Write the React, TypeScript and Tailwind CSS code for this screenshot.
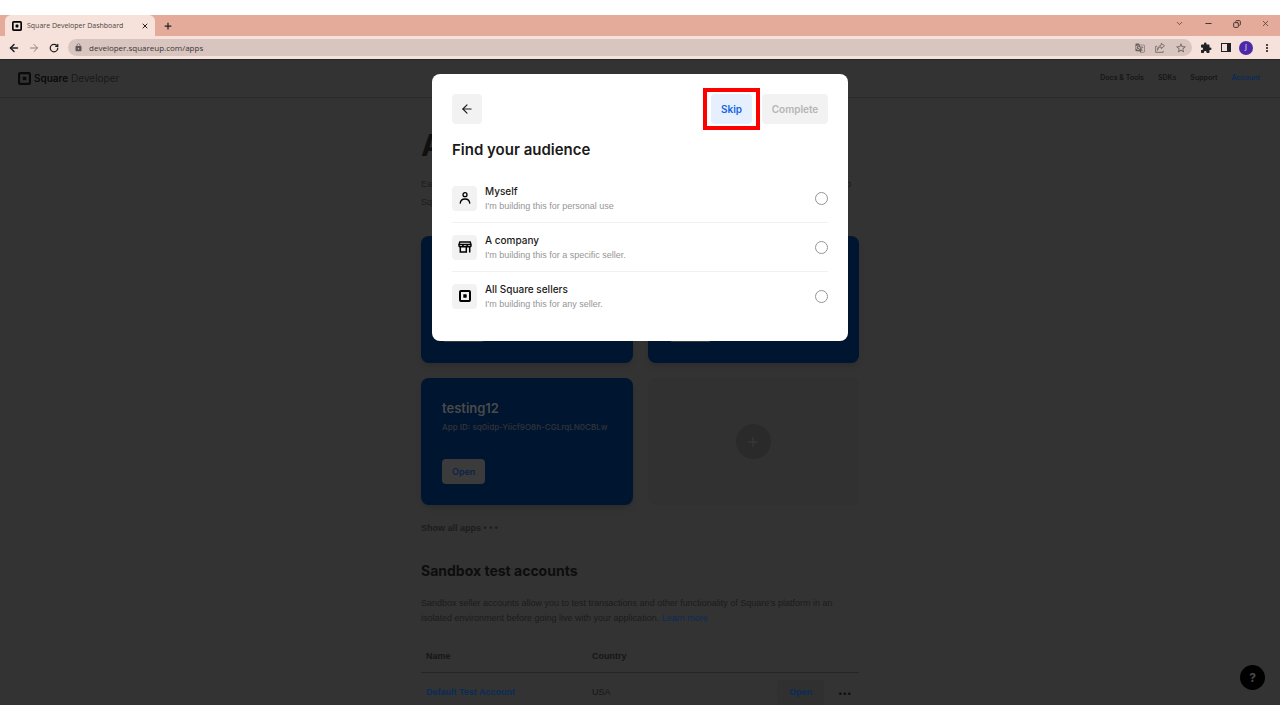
import React from 'react';
import { ArrowLeft, ArrowRight, ChevronDown, Copy, Minus, Plus, RotateCw, X } from 'lucide-react';
import { MdGTranslate, MdLock, MdMoreVert, MdOutlineStarBorder } from 'react-icons/md';

interface AppCardProps {
  name: string;
  appId: string;
}

interface Audience {
  id: string;
  title: string;
  description: string;
  icon: React.ReactNode;
}

const SquareLogo = ({ className }: { className: string }) => (
  <svg viewBox="0 0 12 12" className={className} aria-hidden="true">
    <rect x="1" y="1" width="10" height="10" rx="1" fill="none" stroke="currentColor" strokeWidth="2" />
    <rect x="4.3" y="4.3" width="3.4" height="3.4" rx="0.4" fill="currentColor" />
  </svg>
);

const PersonIcon = () => (
  <svg viewBox="0 0 12 12" className="h-3 w-3" fill="none" stroke="currentColor" strokeWidth="1.3" aria-hidden="true">
    <circle cx="6" cy="2.7" r="2" />
    <path d="M1.2 11.6C1.4 8.6 3.4 7 6 7s4.600 1.600 4.800 4.600" />
  </svg>
);

const StoreIcon = () => (
  <svg viewBox="0 0 14 12" className="h-3 w-3.5" fill="none" stroke="currentColor" strokeWidth="1.5" aria-hidden="true">
    <path d="M1.800 1.100h10.400l.8 2.400v1.300a1 1 0 0 1-1 1h-1.200a1 1 0 0 1-1-1 1 1 0 0 1-1 1H6a1 1 0 0 1-1-1 1 1 0 0 1-1 1H2a1 1 0 0 1-1-1V3.500z" />
    <path d="M1 3.500h12M4.900 3.500v2M9.100 3.500v2M2.300 6v5h6V6M11.700 6v5.500" />
  </svg>
);

const PuzzleIcon = () => (
  <svg viewBox="0 0 24 24" className="h-3 w-3" fill="currentColor" aria-hidden="true">
    <path d="M20.5 11H19V7c0-1.1-.9-2-2-2h-4V3.500a2.500 2.500 0 0 0-5 0V5H4c-1.100 0-2 .9-2 2v3.800h1.500c1.500 0 2.700 1.200 2.700 2.700S5 16.200 3.500 16.200H2V20c0 1.100.9 2 2 2h3.800v-1.500c0-1.500 1.200-2.700 2.700-2.700s2.700 1.200 2.700 2.700V22H17c1.100 0 2-.9 2-2v-4h1.500a2.500 2.500 0 0 0 0-5z" />
  </svg>
);

const ShareIcon = () => (
  <svg viewBox="0 0 12 12" className="h-2.5 w-2.5" fill="none" stroke="currentColor" strokeWidth="1" aria-hidden="true">
    <path d="M2.500 4H.8v7.200h9V9.500" />
    <path d="M3 8.800c.4-2.800 2-4 4.500-4.100V6.800l4-3.400-4-3v2.200C4.600 2.900 3.100 5.500 3 8.800z" />
  </svg>
);

const audiences: Audience[] = [
  { id: 'myself', title: 'Myself', description: "I'm building this for personal use", icon: <PersonIcon /> },
  { id: 'company', title: 'A company', description: "I'm building this for a specific seller.", icon: <StoreIcon /> },
  { id: 'all', title: 'All Square sellers', description: "I'm building this for any seller.", icon: <SquareLogo className="h-3 w-3" /> }
];

const BrowserChrome = () => (
  <div className="shrink-0 font-['Open_Sans',sans-serif] text-[#202124]">
    {/* Tab strip */}
    <div className="flex h-[21px] items-center bg-[#e4ab9a] pl-[5px]">
      <div className="flex h-full w-[150px] items-center rounded-t-md bg-[#f7e1db] pl-[7px] pr-1.5">
        <SquareLogo className="h-2.5 w-2.5 text-black" />
        <span className="ml-[5px] flex-1 whitespace-nowrap pt-px text-[7px] text-[#4b4542]">Square Developer Dashboard</span>
        <button aria-label="Close tab"><X className="h-2 w-2" strokeWidth={3} /></button>
      </div>
      <button aria-label="New tab" className="ml-2"><Plus className="h-2.5 w-2.5" strokeWidth={3} /></button>
      <div className="ml-auto flex items-center gap-5 pb-1 pr-2.5 text-[#4a342e]">
        <button aria-label="Search tabs"><ChevronDown className="h-[9px] w-[9px]" /></button>
        <button aria-label="Minimize"><Minus className="h-[9px] w-[9px]" strokeWidth={3} /></button>
        <button aria-label="Restore"><Copy className="h-2 w-2 -scale-x-100" strokeWidth={3} /></button>
        <button aria-label="Close window"><X className="h-[9px] w-[9px]" /></button>
      </div>
    </div>

    {/* Toolbar */}
    <div className="flex h-[23px] items-center gap-2 bg-[#f7e1db] pl-2 pr-[7px]">
      <button aria-label="Back"><ArrowLeft className="h-3 w-3" strokeWidth={3} /></button>
      <button aria-label="Forward" className="text-[#8d817d]"><ArrowRight className="h-3 w-3" /></button>
      <button aria-label="Reload" className="flex w-3 justify-center"><RotateCw className="h-2.5 w-2.5" strokeWidth={3} /></button>
      <div className="flex h-[17px] min-w-0 flex-1 items-center rounded-full bg-[#d8c5bf] pl-1.5 pr-[5px]">
        <MdLock className="h-[9px] w-[9px] text-[#5f5754]" />
        <input
          aria-label="Address"
          defaultValue="developer.squareup.com/apps"
          className="ml-1.5 min-w-0 flex-1 bg-transparent text-[8px] leading-4 text-[#3a3533] outline-none"
        />
        <div className="flex items-center gap-2.5 text-[#6b615e]">
          <MdGTranslate className="h-2.5 w-2.5" />
          <ShareIcon />
          <MdOutlineStarBorder className="h-3 w-3" />
        </div>
      </div>
      <PuzzleIcon />
      <span className="ml-px h-[9px] w-2.5 border border-r-4 border-[#202124]" />
      <span className="flex h-3.5 w-3.5 items-center justify-center rounded-full bg-[#4b2aa8] text-[7px] text-white">J</span>
      <MdMoreVert className="h-3 w-3" />
    </div>
  </div>
);

const AppCard: React.FC<AppCardProps> = ({ name, appId }) => (
  <div className="flex h-[127px] flex-col items-start rounded-lg bg-[#00152f] px-[21px] pt-[21px] shadow-md">
    <h3 className="text-[13px] font-semibold leading-[18px] text-[#4a4a4a]">{name}</h3>
    <p className="mt-1 whitespace-nowrap text-[8px] font-semibold leading-3 text-[#2e3138]">App ID: {appId}</p>
    <button className="mt-[26px] h-[25px] rounded bg-[#3b3b3b] px-2.5 text-[9px] font-semibold text-[#0b2348]">Open</button>
  </div>
);

const DashboardPage = () => (
  <div className="h-full overflow-hidden border-t border-[#272727] bg-[#333333] text-[#161616]">
    <header className="flex h-[38px] items-center border-b border-[#2b2b2b] px-[18px]">
      <div className="flex items-center gap-[3px] text-[10px] text-[#0a0a0a]">
        <SquareLogo className="h-[13px] w-[13px]" />
        <span><b className="font-semibold">Square</b> <span className="text-[#191919]">Developer</span></span>
      </div>
      <nav className="ml-auto flex gap-3.5 pr-0.5 text-[7px] font-semibold">
        <a href="#docs">Docs &amp; Tools</a>
        <a href="#sdks">SDKs</a>
        <a href="#support">Support</a>
        <a href="#account" className="text-[#082c58]">Account</a>
      </nav>
    </header>

    <main className="mx-auto max-w-[438px]">
      <h1 className="pt-[27px] text-[30px] font-bold leading-10 text-[#101010]">Applications</h1>
      <p className="mt-2.5 whitespace-nowrap font-['Liberation_Sans',sans-serif] text-[9px] leading-[18px] text-[#1b1b1b]">
        Each application has its own set of credentials. Open an application to update its keys and permissions or to
        <br />
        Square account settings.
      </p>

      <div className="mt-[25px] grid grid-cols-2 gap-[15px]">
        <AppCard name="testing10" appId="sq0idp" />
        <AppCard name="testing11" appId="sq0idp" />
        <AppCard name="testing12" appId="sq0idp-Yiicf9O8h-CGLrqLN0CBLw" />
        <div className="flex h-[127px] items-center justify-center rounded-lg bg-[#313131]">
          <button aria-label="Create application" className="flex h-[35px] w-[35px] items-center justify-center rounded-full bg-[#2a2a2a] text-[#3b3b3b]">
            <Plus className="h-4 w-4" strokeWidth={1.5} />
          </button>
        </div>
      </div>

      <button className="mt-4 block font-['Liberation_Sans',sans-serif] text-[9px] font-semibold leading-[14px] text-[#1c1c1c]">Show all apps • • •</button>

      <h2 className="mt-[26px] text-[14px] font-bold leading-5 text-[#0d0d0d]">Sandbox test accounts</h2>
      <p className="mt-[15px] font-['Liberation_Sans',sans-serif] text-[9px] leading-[15px] text-[#1b1b1b]">
        Sandbox seller accounts allow you to test transactions and other functionality of Square's platform in an
        isolated environment before going live with your application.{' '}
        <a href="#learn" className="text-[#082c58]">Learn more</a>
      </p>

      <table className="mt-[15px] w-full table-fixed text-left font-['Liberation_Sans',sans-serif] text-[9px]">
        <thead>
          <tr className="h-[31px] border-b border-[#262626]">
            <th className="w-[166px] pl-[5px] font-semibold">Name</th>
            <th className="pl-[5px] font-semibold">Country</th>
            <th className="w-[102px]" aria-label="Actions" />
          </tr>
        </thead>
        <tbody>
          <tr className="h-[41px]">
            <td className="pl-[5px]"><a href="#default" className="font-semibold text-[#082c58]">Default Test Account</a></td>
            <td className="pl-[5px]">USA</td>
            <td className="pl-5">
              <div className="flex items-center gap-3.5">
                <button className="h-[25px] w-[47px] rounded bg-[#303030] font-semibold text-[#082c58]">Open</button>
                <button aria-label="More" className="font-['Inter',sans-serif] text-[8px] text-[#0d0d0d]">•••</button>
              </div>
            </td>
          </tr>
        </tbody>
      </table>
    </main>
  </div>
);

const AudienceDialog = () => (
  <div role="dialog" aria-labelledby="dialog-title" className="mt-[15px] h-fit w-[416px] rounded-lg bg-white p-5 text-[#1a1a1a]">
    <div className="flex items-center">
      <button aria-label="Go back" className="flex h-[30px] w-[30px] items-center justify-center rounded bg-[#f2f2f2]">
        <ArrowLeft className="h-3.5 w-3.5" />
      </button>
      <div className="ml-auto flex gap-2.5 text-[10px] font-semibold">
        <div className="relative">
          <button className="h-[30px] w-[41px] rounded bg-[#e5effe] text-[#1565e0]">Skip</button>
          {/* Callout frame */}
          <span className="pointer-events-none absolute -inset-x-2 -inset-y-1.5 border-4 border-[#ff0000]" />
        </div>
        <button disabled className="h-[30px] w-[66px] rounded bg-[#f2f2f2] text-[#b5b5b5]">Complete</button>
      </div>
    </div>

    <h2 id="dialog-title" className="mt-4 text-[15px] font-semibold leading-5">Find your audience</h2>

    <div className="mt-3.5">
      {audiences.map((audience) => (
        <label key={audience.id} className="flex h-[49px] items-center border-b border-[#f0f0f0] last:border-transparent">
          <span className="flex h-[25px] w-[25px] items-center justify-center rounded bg-[#f2f2f2] text-black">{audience.icon}</span>
          <span className="ml-2 flex-1 pt-0.5">
            <span className="block text-[10px] font-medium leading-[15px]">{audience.title}</span>
            <span className="block font-['Liberation_Sans',sans-serif] text-[9px] leading-[15px] text-[#959595]">{audience.description}</span>
          </span>
          <input
            type="radio"
            name="audience"
            value={audience.id}
            className="h-[13px] w-[13px] appearance-none rounded-full border border-[#959595] checked:border-4 checked:border-[#1565e0]"
          />
        </label>
      ))}
    </div>
  </div>
);

const App: React.FC = () => {
  return (
    <div className="flex h-screen flex-col bg-white py-[15px] font-['Inter',sans-serif]">
      <BrowserChrome />
      <div className="relative min-h-0 flex-1">
        <DashboardPage />
        <div className="absolute inset-0 flex justify-center">
          <AudienceDialog />
        </div>
        <button aria-label="Help" className="absolute bottom-[15px] right-[15px] h-[25px] w-[25px] rounded-full bg-black text-[12px] font-bold text-[#4a4a4a]">?</button>
      </div>
    </div>
  );
};

export default App;
